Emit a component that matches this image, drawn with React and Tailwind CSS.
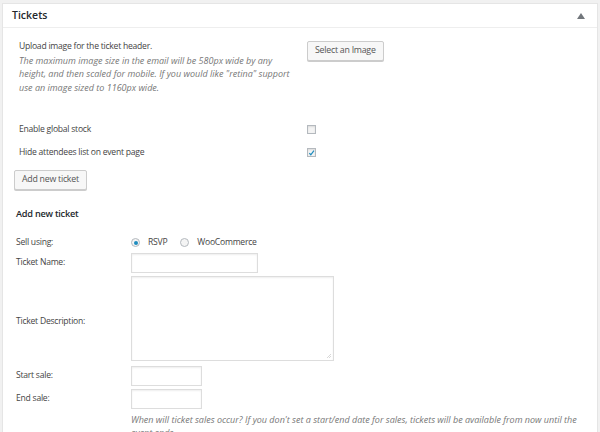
import React from 'react';

const font = { fontFamily: '"Open Sans", "Noto Sans", sans-serif' };

function Checkbox({ checked }) {
  return (
    <span className="w-[9px] h-[9px] border border-[#b4b9be] bg-[#f4f4f4] shadow-[inset_0_1px_2px_rgba(0,0,0,0.1)] flex items-center justify-center">
      {checked && (
        <svg width="8" height="8" viewBox="0 0 8 8">
          <path d="M1.5 4.2 L3.2 6 L6.8 1.2" fill="none" stroke="#1e8cbe" strokeWidth="1.4" />
        </svg>
      )}
    </span>
  );
}

function Radio({ checked }) {
  return (
    <span className="w-[9px] h-[9px] rounded-full border border-[#b4b9be] bg-[#f4f4f4] flex items-center justify-center">
      {checked && <span className="w-[4px] h-[4px] rounded-full bg-[#1e8cbe]" />}
    </span>
  );
}

function Button({ children, className = '' }) {
  return (
    <div className={`h-[20px] px-[7px] flex items-center border border-[#ccc] rounded-[2px] bg-[#f7f7f7] shadow-[0_1px_0_#ccc] text-[#555] text-[8.8px] tracking-[-0.25px] ${className}`}>
      {children}
    </div>
  );
}

const input = 'h-[20px] border border-[#ddd] shadow-[inset_0_1px_2px_rgba(0,0,0,0.07)]';

export default function App() {
  return (
    <div className="w-[600px] h-[432px] overflow-hidden bg-[#f1f1f1] pt-[3px] px-[2px]" style={font}>
      <div className="bg-white border border-[#e5e5e5] h-[460px] text-[#444] text-[8.6px] tracking-[-0.25px]">
        {/* header */}
        <div className="h-[24px] px-[9px] flex items-center justify-between border-b border-[#eee]">
          <span className="text-[10.5px] font-semibold text-[#23282d] tracking-normal">Tickets</span>
          <svg width="8" height="6" viewBox="0 0 8 6" className="mr-[3px]">
            <path d="M0 6 L4 0 L8 6 Z" fill="#72777c" />
          </svg>
        </div>

        {/* image upload */}
        <div className="flex pl-[16px] pt-[12px]">
          <div className="w-[288px] leading-[13.5px]">
            <div>Upload image for the ticket header.</div>
            <div className="italic text-[#777] w-[282px] text-[9px] tracking-normal">
              The maximum image size in the email will be 580px wide by any height, and then scaled for mobile. If you would like "retina" support use an image sized to 1160px wide.
            </div>
          </div>
          <Button className="mt-[1px]">Select an Image</Button>
        </div>

        {/* options */}
        <div className="pl-[16px] mt-[31px] flex flex-col gap-[14px]">
          <div className="flex items-center h-[9px]">
            <span className="w-[288px]">Enable global stock</span>
            <Checkbox />
          </div>
          <div className="flex items-center h-[9px]">
            <span className="w-[288px]">Hide attendees list on event page</span>
            <Checkbox checked />
          </div>
        </div>

        <div className="pl-[11px] mt-[13px] flex">
          <Button>Add new ticket</Button>
        </div>

        <div className="pl-[13px] mt-[17px] text-[9.2px] font-semibold text-[#23282d]">Add new ticket</div>

        {/* form */}
        <div className="pl-[13px] mt-[15px] flex flex-col">
          <div className="flex items-center h-[14px]">
            <span className="w-[115px]">Sell using:</span>
            <div className="flex items-center">
              <Radio checked />
              <span className="ml-[8px]">RSVP</span>
              <span className="ml-[13px]"><Radio /></span>
              <span className="ml-[8px]">WooCommerce</span>
            </div>
          </div>
          <div className="flex items-center h-[20px] mt-[3px]">
            <span className="w-[115px]">Ticket Name:</span>
            <div className={`w-[127px] ${input}`} />
          </div>
          <div className="flex items-center mt-[3px]">
            <span className="w-[115px] mt-[6px]">Ticket Description:</span>
            <div className="relative w-[203px] h-[85px] border border-[#ddd] shadow-[inset_0_1px_2px_rgba(0,0,0,0.07)]">
              <svg width="6" height="6" viewBox="0 0 6 6" className="absolute right-[1px] bottom-[1px]">
                <path d="M5 1 L1 5 M5 3 L3 5" stroke="#aaa" strokeWidth="0.8" strokeDasharray="0.8 0.8" />
              </svg>
            </div>
          </div>
          <div className="flex items-center mt-[5px]">
            <span className="w-[115px]">Start sale:</span>
            <div className={`w-[71px] ${input}`} />
          </div>
          <div className="flex items-center mt-[3px]">
            <span className="w-[115px]">End sale:</span>
            <div className={`w-[71px] ${input}`} />
          </div>
          <div className="ml-[115px] mt-[4px] w-[452px] italic text-[#777] leading-[13px] text-[9px] tracking-normal">
            When will ticket sales occur? If you don't set a start/end date for sales, tickets will be available from now until the event ends.
          </div>
        </div>
      </div>
    </div>
  );
}
